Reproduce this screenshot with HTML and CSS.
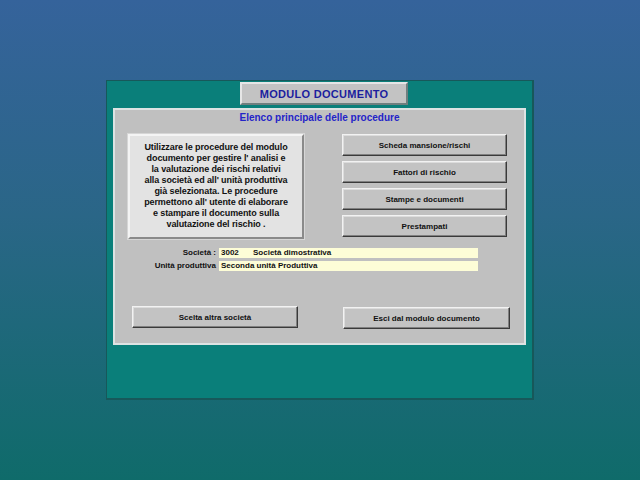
FILE: index.html
```html
<!DOCTYPE html>
<html>
<head>
<meta charset="utf-8">
<link rel="stylesheet" href="styles.css">
</head>
<body>
<div class="window">
  <div class="title-row">
    <div class="title-box">MODULO DOCUMENTO</div>
  </div>
  <div class="panel">
    <div class="panel-heading">Elenco principale delle procedure</div>
    <div class="top-area">
      <div class="info-box">Utilizzare le procedure del modulo<br>documento per gestire l' analisi e<br>la valutazione dei rischi relativi<br>alla società ed all' unità produttiva<br>già selezionata. Le procedure<br>permettono all' utente di elaborare<br>e stampare il documento sulla<br>valutazione del rischio .</div>
      <div class="btn-col">
        <div class="btn">Scheda mansione/rischi</div>
        <div class="btn">Fattori di rischio</div>
        <div class="btn">Stampe e documenti</div>
        <div class="btn">Prestampati</div>
      </div>
    </div>
    <div class="fields">
      <div class="field-label">Società :</div>
      <div class="field-value"><span class="code">3002</span>Società dimostrativa</div>
      <div class="field-label">Unità produttiva</div>
      <div class="field-value">Seconda unità Produttiva</div>
    </div>
    <div class="bottom-row">
      <div class="btn btn-left">Scelta altra società</div>
      <div class="btn btn-right">Esci dal modulo documento</div>
    </div>
  </div>
</div>
</body>
</html>
```

FILE: styles.css
```css
html, body {
  margin: 0;
  padding: 0;
}
body {
  width: 640px;
  height: 480px;
  background: linear-gradient(180deg, #35639b 0%, #2a6687 45%, #0f6b6a 100%);
  display: flex;
  align-items: center;
  justify-content: center;
  font-family: "Liberation Sans", Arial, sans-serif;
  overflow: hidden;
}
.window {
  box-sizing: border-box;
  width: 428px;
  height: 320px;
  background: #0a7f7a;
  border: 1px solid #17585a;
  border-right-width: 2px;
  border-bottom-width: 2px;
  padding: 1px 7px 0 6px;
  display: flex;
  flex-direction: column;
}
.title-row {
  display: flex;
  padding-left: 127px;
  height: 26px;
}
.title-box {
  box-sizing: border-box;
  width: 168px;
  height: 23px;
  background: #c3c3c3;
  border: 2px solid;
  border-color: #e6e6e6 #6f7f7f #6f7f7f #e6e6e6;
  color: #1c1e9e;
  font-size: 11px;
  font-weight: bold;
  display: flex;
  align-items: center;
  justify-content: center;
  letter-spacing: 0.3px;
}
.panel {
  box-sizing: border-box;
  width: 413px;
  height: 237px;
  background: #c0c0c0;
  border: 2px solid #dde3e3;
  display: flex;
  flex-direction: column;
  padding: 0 0 0 13px;
}
.panel-heading {
  color: #2424c8;
  font-weight: bold;
  font-size: 10px;
  text-align: center;
  margin-left: -13px;
  height: 24px;
  line-height: 16px;
}
.top-area {
  display: flex;
  height: 106px;
}
.info-box {
  box-sizing: border-box;
  width: 176px;
  height: 105px;
  background: #e3e3e3;
  border: 2px solid;
  border-color: #f4f4f4 #8a8a8a #8a8a8a #f4f4f4;
  box-shadow: 0 0 0 1px #d6d6d6;
  font-size: 9px;
  font-weight: bold;
  color: #111;
  text-align: center;
  line-height: 11px;
  padding: 6px 0 0 0;
  letter-spacing: -0.1px;
  white-space: nowrap;
}
.btn-col {
  margin-left: 38px;
  display: flex;
  flex-direction: column;
  gap: 5px;
}
.btn {
  box-sizing: border-box;
  width: 165px;
  height: 22px;
  background: #c3c3c3;
  border: 1px solid;
  border-color: #f2f2f2 #3a3a3a #3a3a3a #f2f2f2;
  box-shadow: inset -1px -1px 0 #808080, inset 1px 1px 0 #dcdcdc;
  font-size: 8px;
  font-weight: bold;
  color: #111;
  display: flex;
  align-items: center;
  justify-content: center;
}
.fields {
  display: grid;
  grid-template-columns: 88px 259px;
  column-gap: 3px;
  row-gap: 3px;
  margin-top: 8px;
  font-size: 8px;
  font-weight: bold;
  color: #111;
}
.field-label {
  text-align: right;
  height: 10px;
  line-height: 10px;
}
.field-value {
  background: #fdfdd7;
  height: 10px;
  line-height: 10px;
  padding-left: 2px;
}
.code {
  display: inline-block;
  width: 32px;
}
.bottom-row {
  display: flex;
  margin-top: 35px;
  padding-left: 4px;
}
.btn-left {
  width: 166px;
}
.btn-right {
  width: 167px;
  margin-left: 45px;
  margin-top: 1px;
}
```
